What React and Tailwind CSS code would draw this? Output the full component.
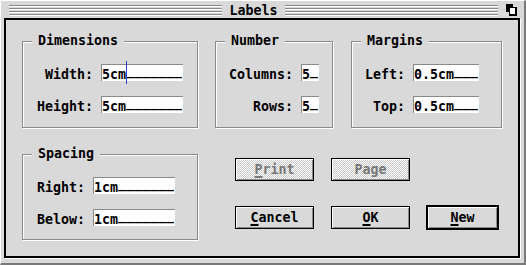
import React from "react";

const mono = "font-['DejaVu_Sans_Mono','Liberation_Mono',monospace] font-bold text-[13.3px] leading-[16px] text-black";

// one text field: typed text plus the trailing underscores
function Field({ text, fill, w, cursor }) {
    return (
        <div className={`relative h-[17px] shrink-0 overflow-visible whitespace-pre border-t border-l border-[#8a8a8a] bg-white pt-[2px] ${w}`}>
            {text}
            <span className="relative -top-[4px]">{fill}</span>
            {cursor && <span className="absolute left-[24px] -top-[4px] h-[23px] w-px bg-[#2f3fcf]" />}
        </div>
    );
}

function Row({ label, lw, children }) {
    return (
        <div className="flex h-[17px]">
            <span className={`mr-[8px] shrink-0 whitespace-pre pt-[3px] text-right ${lw}`}>{label}</span>
            {children}
        </div>
    );
}

function Group({ title, className, pl, children }) {
    return (
        <div className={`relative shrink-0 border border-[#8a8a8a] shadow-[inset_1px_1px_0_#fff,1px_1px_0_#fff] ${className}`}>
            <span className="absolute left-[9px] -top-[9px] bg-[#d9d9d9] px-[6px]">{title}</span>
            <div className={`flex flex-col gap-[15px] pt-[22px] ${pl}`}>{children}</div>
        </div>
    );
}

function Stripes() {
    return (
        <div className="mt-[4px] flex flex-1 flex-col gap-px">
            {[0, 1, 2, 3].map((i) => (
                <div key={i} className="h-[2px] border-t border-b border-t-[#8a8a8a] border-b-white" />
            ))}
        </div>
    );
}

function Button({ children, disabled, main, w }) {
    return (
        <div
            className={`flex h-[23px] items-center justify-center border border-black shadow-[inset_1px_1px_0_#fff,inset_-1px_-1px_0_#8a8a8a] ${w} ${
                disabled
                    ? "bg-[repeating-conic-gradient(#fff_0_25%,#c8c8c8_0_50%)] bg-[length:2px_2px] text-[#777]"
                    : "bg-[#d9d9d9]"
            } ${main ? "ring-1 ring-black" : ""}`}
        >
            {children}
        </div>
    );
}

const U = ({ children }) => <span className="underline decoration-2 underline-offset-[2px]">{children}</span>;

export default function App() {
    return (
        <div className={`h-[265px] w-[526px] border-t border-l border-t-white border-l-white border-r-2 border-b-2 border-r-[#7a7a7a] border-b-[#7a7a7a] bg-[#d9d9d9] ${mono}`}>
            {/* title bar */}
            <div className="flex h-[17px] items-start">
                <div className="ml-[8px] flex flex-1">
                    <Stripes />
                </div>
                <span className="px-[7px] pt-[2px]">Labels</span>
                <div className="flex flex-1">
                    <Stripes />
                </div>
                <div className="w-[26px] pl-[8px] pt-[3px]">
                    <svg width="12" height="12" viewBox="0 0 12 12">
                        <rect x="0" y="0" width="7" height="8" fill="#000" />
                        <rect x="3" y="3" width="8" height="9" fill="#000" />
                        <rect x="4" y="4" width="5" height="6" fill="#fff" />
                    </svg>
                </div>
            </div>

            {/* dialog body */}
            <div className="ml-[3px] h-[240px] w-[516px] border-2 border-black pl-[16px] pt-[21px] shadow-[1px_1px_0_#fff]">
                <div className="flex">
                    <Group title="Dimensions" className="h-[87px] w-[176px]" pl="pl-[14px]">
                        <Row label="Width:" lw="w-[56px]">
                            <Field text="5cm" fill="_______" w="w-[82px]" cursor />
                        </Row>
                        <Row label="Height:" lw="w-[56px]">
                            <Field text="5cm" fill="_______" w="w-[82px]" />
                        </Row>
                    </Group>
                    <Group title="Number" className="ml-[17px] h-[87px] w-[118px]" pl="pl-[13px]">
                        <Row label="Columns:" lw="w-[64px]">
                            <Field text="5" fill="_" w="w-[18px]" />
                        </Row>
                        <Row label="Rows:" lw="w-[64px]">
                            <Field text="5" fill="_" w="w-[18px]" />
                        </Row>
                    </Group>
                    <Group title="Margins" className="ml-[18px] h-[87px] w-[151px]" pl="pl-[13px]">
                        <Row label="Left:" lw="w-[40px]">
                            <Field text="0.5cm" fill="___" w="w-[66px]" />
                        </Row>
                        <Row label="Top:" lw="w-[40px]">
                            <Field text="0.5cm" fill="___" w="w-[66px]" />
                        </Row>
                    </Group>
                </div>

                <div className="mt-[26px] flex">
                    <Group title="Spacing" className="h-[86px] w-[176px]" pl="pl-[14px]">
                        <Row label="Right:" lw="w-[48px]">
                            <Field text="1cm" fill="_______" w="w-[82px]" />
                        </Row>
                        <Row label="Below:" lw="w-[48px]">
                            <Field text="1cm" fill="_______" w="w-[82px]" />
                        </Row>
                    </Group>
                    <div className="ml-[37px] mt-[4px] grid h-fit grid-cols-[79px_79px_71px] gap-x-[17px] gap-y-[25px]">
                        <Button disabled><U>P</U>rint</Button>
                        <Button disabled>Pa<U>g</U>e</Button>
                        <div />
                        <Button><U>C</U>ancel</Button>
                        <Button><U>O</U>K</Button>
                        <Button main><U>N</U>ew</Button>
                    </div>
                </div>
            </div>
        </div>
    );
}
